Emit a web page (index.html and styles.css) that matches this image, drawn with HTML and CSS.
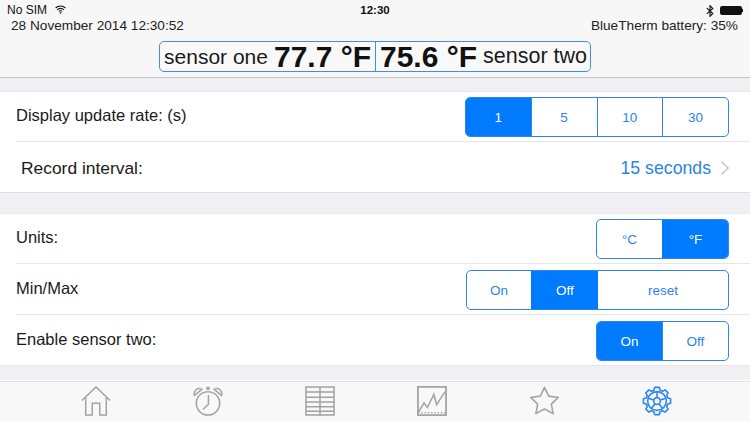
FILE: index.html
```html
<!DOCTYPE html>
<html lang="en">
<head>
<meta charset="utf-8">
<title>Settings</title>
<link rel="stylesheet" href="styles.css">
</head>
<body>
<div class="screen">
  <header class="header">
    <div class="status">
      <div class="status-left">No SIM
        <svg class="wifi" width="11" height="9" viewBox="0 0 11 9"><path d="M.6 3A7 7 0 0 1 10.400 3M2.200 4.800a4.600 4.600 0 0 1 6.600 0M3.800 6.400a2.400 2.400 0 0 1 3.400 0" fill="none" stroke="#111" stroke-width="1.100"/><path d="M5.500 9 4.400 7.700a1.600 1.600 0 0 1 2.200 0z" fill="#111"/></svg>
      </div>
      <div class="status-time">12:30</div>
      <div class="status-right">
        <svg width="8" height="12" viewBox="0 0 8 12"><path d="M.8 3.200 6.800 8.500 4 11.300V.7l2.800 2.800L.8 8.800" fill="none" stroke="#111" stroke-width="1.100"/></svg>
        <span class="battery"><span class="battery-fill"></span></span><span class="battery-tip"></span>
      </div>
    </div>
    <div class="info">
      <span>28 November 2014 12:30:52</span>
      <span>BlueTherm battery: 35%</span>
    </div>
    <div class="readout-wrap">
      <div class="readout">
        <div class="read read-one"><span class="sensor">sensor one</span><b class="temp">77.7 °F</b></div>
        <div class="read read-two"><b class="temp">75.6 °F</b><span class="sensor sensor-two">sensor two</span></div>
      </div>
    </div>
  </header>

  <main class="content">
    <section class="group group-first">
      <div class="row row-seg">
        <span class="label">Display update rate: (s)</span>
        <div class="seg seg-rate">
          <span class="on">1</span><span>5</span><span>10</span><span>30</span>
        </div>
      </div>
      <div class="row row-link">
        <span class="label label-big">Record interval:</span>
        <span class="value">15 seconds
          <svg class="chev" width="8" height="14" viewBox="0 0 8 14"><path d="M.7 .7l6.300 6.300-6.300 6.300" fill="none" stroke="#c7c7cc" stroke-width="1.600"/></svg>
        </span>
      </div>
    </section>

    <section class="group group-second">
      <div class="row row-seg">
        <span class="label">Units:</span>
        <div class="seg seg-two">
          <span>°C</span><span class="on">°F</span>
        </div>
      </div>
      <div class="row row-seg row-tall">
        <span class="label">Min/Max</span>
        <div class="seg seg-minmax">
          <span class="w-on">On</span><span class="on w-off">Off</span><span class="grow">reset</span>
        </div>
      </div>
      <div class="row row-seg row-tall row-last">
        <span class="label">Enable sensor two:</span>
        <div class="seg seg-two">
          <span class="on">On</span><span>Off</span>
        </div>
      </div>
    </section>
  </main>

  <nav class="tabbar">
    <svg class="tab" width="30" height="30" viewBox="0 0 32 32" fill="none" stroke="#a3a3a3" stroke-width="1.600"><path d="M1 15.500 16 1 31 15.500M5 12V31H12V18.500H20V31H27V12"/></svg>
    <svg class="tab" width="30" height="30" viewBox="0 0 32 32" fill="none" stroke="#a3a3a3" stroke-width="1.600"><circle cx="16" cy="18.500" r="12.500"/><path d="M16.500 9.500V19.500L10.500 25"/><path d="M1.500 10A5.500 5.500 0 0 1 9.500 3.500ZM30.500 10A5.500 5.500 0 0 0 22.500 3.500Z"/><circle cx="16" cy="2.500" r="1.300"/></svg>
    <svg class="tab" width="30" height="30" viewBox="0 0 32 32" fill="none" stroke="#a3a3a3" stroke-width="1.600"><path d="M1 1H31V31H1ZM1 6.500H31M1 12H31M1 17H31M1 22H31M1 27H31M16 1V31"/></svg>
    <svg class="tab" width="30" height="30" viewBox="0 0 32 32" fill="none" stroke="#a3a3a3" stroke-width="1.600"><path d="M1 1H31V31H1Z" stroke-width="1.900"/><path d="M1.500 28 7.500 18 11 23 18 9 21 20 30 6"/><path d="M1 28.500H31" stroke-dasharray="1.500 2"/></svg>
    <svg class="tab" width="31" height="30" viewBox="0 0 32 32" fill="none" stroke="#a3a3a3" stroke-width="1.700" stroke-linejoin="round"><path d="M16 1.500 20.500 10.800 30.800 12.200 23.300 19.300 25.200 29.500 16 24.600 6.800 29.500 8.700 19.300 1.200 12.200 11.500 10.800Z"/></svg>
    <svg class="tab" width="30" height="30" viewBox="0 0 32 32" fill="none" stroke="#2f87f0" stroke-width="1.700"><path d="M13.500 1.500h5l.8 3 2.600 1.100 2.700-1.500 3.300 3.300-1.500 2.700 1.100 2.600 3 .8v5l-3 .8-1.100 2.600 1.500 2.700-3.300 3.300-2.700-1.500-2.600 1.100-.8 3h-5l-.8-3-2.600-1.100-2.700 1.500-3.300-3.300 1.500-2.700-1.100-2.600-3-.8v-5l3-.8 1.100-2.600-1.500-2.700 3.300-3.300 2.700 1.500 2.600-1.100z" stroke-linejoin="round"/><circle cx="16" cy="16" r="10"/><circle cx="16" cy="16" r="3.600"/><path d="M16 6V12.400M25.500 13 19.400 15M22 24 18.100 18.900M10 24 13.900 18.900M6.500 13 12.600 15"/></svg>
  </nav>
</div>
</body>
</html>
```
FILE: styles.css
```css
* { box-sizing: border-box; }
html, body { margin: 0; padding: 0; }
body { font-family: "Liberation Sans", Arial, sans-serif; background: #efeff4; color: #111; }
.screen { width: 750px; height: 422px; overflow: hidden; display: flex; flex-direction: column; background: #efeff4; }

.header { height: 78px; flex: none; background: #f7f7f8; border-bottom: 1px solid #c8c8cc; }
.status { height: 19px; padding: 3px 7px 0 7px; display: flex; justify-content: space-between; position: relative; font-size: 12px; line-height: 15px; }
.status-left { display: flex; align-items: center; gap: 8px; height: 15px; }
.wifi { margin-top: -2px; }
.status-time { position: absolute; left: 0; right: 0; top: 3px; text-align: center; font-weight: 700; font-size: 11.500px; }
.status-right { display: flex; align-items: center; height: 15px; gap: 6px; }
.battery { width: 22px; height: 9px; border: 1px solid #111; border-radius: 1.500px; display: block; margin-right: -6px; }
.battery-fill { display: block; width: 100%; height: 100%; background: #111; }
.battery-tip { width: 1px; height: 3px; background: #111; }

.info { height: 14px; padding: 0 12px 0 11px; display: flex; justify-content: space-between; font-size: 13.650px; line-height: 14px; color: #222; }
.readout-wrap { display: flex; justify-content: center; padding-top: 8px; }
.readout { width: 432px; height: 31px; display: flex; border: 1px solid #3d8fe8; border-radius: 5px; overflow: hidden; background: #f9f9fa; }
.read { display: flex; align-items: center; white-space: nowrap; }
.read-one { flex: 0 0 216px; justify-content: flex-end; padding-right: 4px; border-right: 1px solid #3d8fe8; gap: 6px; }
.read-two { flex: 1 1 0; justify-content: flex-start; padding-left: 4px; gap: 6px; }
.sensor { font-size: 21px; color: #1a1a1a; }
.sensor-two { font-size: 21.500px; }
.temp { font-size: 30px; font-weight: 700; color: #111; }

.content { flex: 1; }
.group { background: #fff; border-top: 1px solid #e9e9ec; border-bottom: 1px solid #dedee2; }
.group-first { margin-top: 13px; height: 102px; }
.group-second { margin-top: 20px; height: 153px; border-bottom-color: #e6e6ea; }

.row { display: flex; justify-content: space-between; padding-right: 21px; margin-left: 16px; }
.row-seg { height: 50px; padding-top: 5px; align-items: flex-start; border-bottom: 1px solid #e6e6ea; }
.row-tall { height: 51px; padding-top: 6px; }
.row-last { height: 50px; border-bottom: 0; }
.row-link { height: 50px; padding-left: 5px; padding-top: 2px; align-items: center; }
.label { font-size: 16.500px; line-height: 36px; color: #1a1a1a; }
.label-big { font-size: 17.400px; }
.value { display: flex; align-items: center; gap: 10px; font-size: 17.700px; color: #2d83e6; }
.chev { flex: none; }

.seg { height: 40px; display: flex; border: 1px solid #2d86ee; border-radius: 5px; overflow: hidden; background: #fff; font-size: 13.500px; color: #2d83e6; }
.seg span { display: flex; align-items: center; justify-content: center; flex: 1 1 0; border-left: 1px solid #2d86ee; }
.seg span:first-child { border-left: 0; }
.seg .on { background: #007aff; color: #fff; border-color: #007aff; }
.seg-rate { width: 264px; }
.seg-two { width: 133px; }
.seg-minmax { width: 263px; }
.seg .w-on { flex: 0 0 64px; }
.seg .w-off { flex: 0 0 67px; }
.seg .grow { flex: 1 1 auto; border-left: 0; }

.tabbar { height: 41px; flex: none; display: flex; gap: 82px; align-items: flex-start; padding: 4px 0 0 81px; background: #f8f8f8; border-top: 1px solid #e2e2e4; box-shadow: 0 -1px 0 #fff; }
.tab { flex: none; }
```
